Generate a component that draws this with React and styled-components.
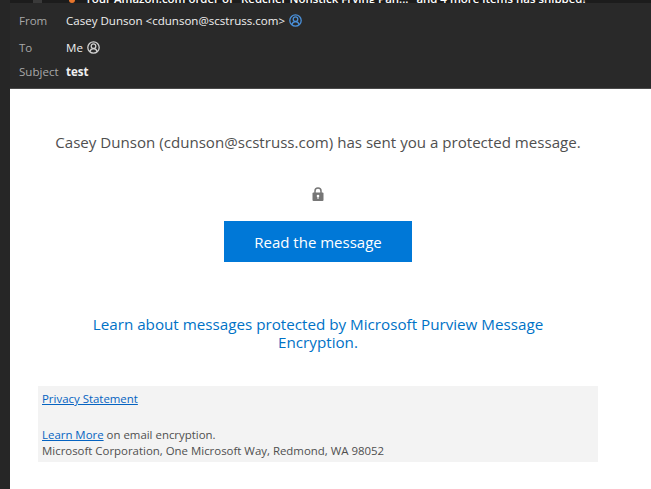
import React from 'react'
import { createGlobalStyle, styled } from 'styled-components'

const GlobalStyle = createGlobalStyle`
  html, body {
    margin: 0;
    padding: 0;
    background: #fff;
  }
  body {
    font-family: "Open Sans", "Noto Sans", sans-serif;
  }
`

function PersonBadge({ color }) {
  return (
    <svg width="13" height="13" viewBox="0 0 13 13" fill="none">
      <circle cx="6.5" cy="6.5" r="5.7" stroke={color} strokeWidth="1.3" />
      <circle cx="6.5" cy="5.2" r="2.3" stroke={color} strokeWidth="1.3" />
      <path d="M2.8 10.700c.6-2 2-3 3.700-3s3.100 1 3.700 3" stroke={color} strokeWidth="1.3" />
    </svg>
  )
}

function Lock() {
  return (
    <svg width="12" height="14" viewBox="0 0 12 14">
      <path d="M3 6V4a3 3 0 0 1 6 0v2" fill="none" stroke="#767676" strokeWidth="1.5" />
      <rect x="0.500" y="5.500" width="11" height="8.500" rx="1" fill="#767676" />
      <circle cx="6" cy="9" r="1.300" fill="#fff" />
      <rect x="5.500" y="9" width="1" height="3" fill="#fff" />
    </svg>
  )
}

export default function App() {
  return (
    <>
      <GlobalStyle />
      <Window>
        <Rail />
        <Main>
          <ListPeek>
            <PeekCheck />
            <PeekDot />
            <PeekText>Your Amazon.com order of "Redcher Nonstick Frying Pan..." and 4 more items has shipped!</PeekText>
          </ListPeek>
          <MailHeader>
            <HeaderRow $spaced>
              <FieldLabel>From</FieldLabel>
              <FieldValue>Casey Dunson &lt;cdunson@scstruss.com&gt;</FieldValue>
              <PersonBadge color="#4a90d9" />
            </HeaderRow>
            <HeaderRow>
              <FieldLabel>To</FieldLabel>
              <FieldValue>Me</FieldValue>
              <PersonBadge color="#d0d0d0" />
            </HeaderRow>
            <HeaderRow>
              <FieldLabel>Subject</FieldLabel>
              <FieldValue $bold>test</FieldValue>
            </HeaderRow>
          </MailHeader>
          <MailBody>
            <Intro>Casey Dunson (cdunson@scstruss.com) has sent you a protected message.</Intro>
            <LockRow>
              <Lock />
            </LockRow>
            <ReadButton>Read the message</ReadButton>
            <LearnLink>Learn about messages protected by Microsoft Purview Message Encryption.</LearnLink>
            <Footer>
              <FooterLink>Privacy Statement</FooterLink>
              <FooterGap />
              <FooterLine><FooterLink>Learn More</FooterLink> on email encryption.</FooterLine>
              <FooterLine>Microsoft Corporation, One Microsoft Way, Redmond, WA 98052</FooterLine>
            </Footer>
          </MailBody>
        </Main>
      </Window>
    </>
  )
}

const Window = styled.div`
  display: flex;
  width: 651px;
  height: 489px;
  overflow: hidden;
`

const Rail = styled.div`
  width: 10px;
  flex-shrink: 0;
  background: #262626;
`

const Main = styled.div`
  flex: 1;
  min-width: 0;
  display: flex;
  flex-direction: column;
`

const ListPeek = styled.div`
  height: 3px;
  flex-shrink: 0;
  overflow: hidden;
  display: flex;
  align-items: flex-end;
  padding-left: 23px;
  background: #1c1c1c;
`

const PeekCheck = styled.div`
  width: 9px;
  height: 3px;
  flex-shrink: 0;
  margin-right: 27px;
  background: #3a3a3a;
`

const PeekDot = styled.div`
  width: 6px;
  height: 3px;
  flex-shrink: 0;
  margin-right: 10px;
  border-radius: 0 0 3px 3px;
  background: #e8762c;
`

const PeekText = styled.div`
  flex-shrink: 0;
  margin-bottom: -3px;
  color: #fff;
  font-size: 11.450px;
  font-weight: 600;
  line-height: 14px;
  height: 14px;
  white-space: nowrap;
`

const MailHeader = styled.div`
  height: 86px;
  flex-shrink: 0;
  box-sizing: border-box;
  padding-top: 5px;
  background: #292929;
  border-bottom: 1px solid #4a4a4a;
`

const HeaderRow = styled.div`
  display: flex;
  align-items: center;
  gap: 4px;
  height: 24px;
  padding-left: 9px;
  margin-bottom: ${p => (p.$spaced ? '3px' : '0')};
  font-size: 11.550px;
`

const FieldLabel = styled.span`
  width: 43px;
  flex-shrink: 0;
  color: #a8a8a8;
`

const FieldValue = styled.span`
  color: #f0f0f0;
  font-weight: ${p => (p.$bold ? 700 : 400)};
`

const MailBody = styled.div`
  flex: 1;
  display: flex;
  flex-direction: column;
  align-items: center;
  background: #fff;
  padding: 43px 25px 0 0;
`

const Intro = styled.div`
  color: #4f4f4f;
  font-size: 15.100px;
  line-height: 20px;
  white-space: nowrap;
`

const LockRow = styled.div`
  display: flex;
  justify-content: center;
  margin-top: 35px;
  height: 14px;
`

const ReadButton = styled.div`
  width: 188px;
  height: 41px;
  margin-top: 20px;
  display: flex;
  align-items: center;
  justify-content: center;
  background: #0078d7;
  color: #fff;
  font-size: 15px;
`

const LearnLink = styled.div`
  width: 480px;
  margin-top: 53px;
  text-align: center;
  color: #0072c6;
  font-size: 15.200px;
  line-height: 18px;
`

const Footer = styled.div`
  align-self: flex-start;
  width: 560px;
  height: 76px;
  box-sizing: border-box;
  margin: 35px 0 0 28px;
  padding: 5px 4px 4px;
  background: #f3f3f3;
  color: #4f4f4f;
  font-size: 11.430px;
  line-height: 16px;
`

const FooterLink = styled.span`
  color: #0563c1;
  text-decoration: underline;
`

const FooterGap = styled.div`
  height: 20px;
`

const FooterLine = styled.div``
